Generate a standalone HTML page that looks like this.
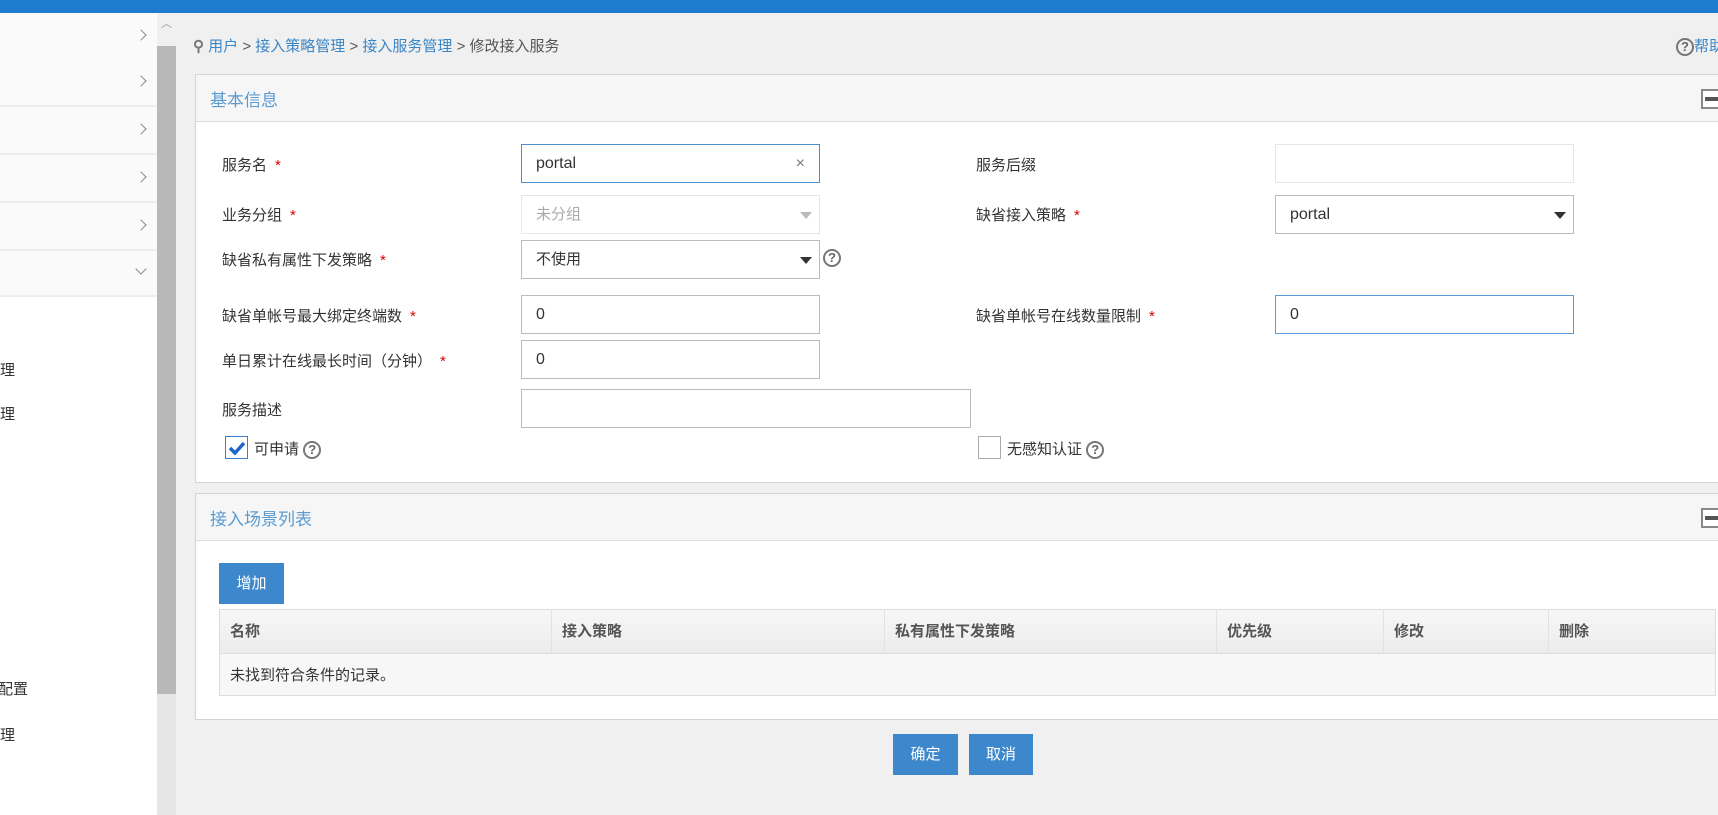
<!DOCTYPE html>
<html><head><meta charset="utf-8"><style>
*{box-sizing:border-box;margin:0;padding:0}
body{width:1718px;height:815px;overflow:hidden;background:#f0f0f0;font-family:"Liberation Sans","Noto Sans CJK SC",sans-serif;font-size:15px;color:#333;position:relative}
.a{position:absolute;white-space:nowrap}
.top{left:0;top:0;width:1718px;height:13px;background:#1f7bcd}
.side{left:0;top:13px;width:157px;height:802px;background:#fff}
.srow{position:absolute;left:0;width:157px;height:48px;border-bottom:2px solid #eee;background:#fafafa}
.chev{position:absolute;right:12px;top:18px;width:8px;height:8px;border-right:1.5px solid #888;border-top:1.5px solid #888;transform:rotate(45deg)}
.sb{left:157px;top:13px;width:19px;height:802px;background:#e6e6e6}
.thumb{left:157px;top:46px;width:19px;height:648px;background:#b8b8b8}
.panel{background:#fff;border:1px solid #d4d4d4;border-right:none}
.ph{position:absolute;left:0;top:0;right:0;height:47px;background:#f6f6f6;border-bottom:1px solid #ddd;color:#5b9bd0;font-size:17px;padding:11px 0 0 14px}
.min{position:absolute;right:-3px;top:14px;width:20px;height:20px;border:2px solid #888;background:#fff}
.min:after{content:"";position:absolute;left:2px;top:6px;width:16px;height:4px;background:#555}
.lbl{position:absolute;font-size:15px;color:#333;white-space:nowrap}
.st{color:#d00;margin-left:8px}
.inp{position:absolute;height:39px;border:1px solid #bbb;background:#fff;padding:0 14px;line-height:37px;font-size:16px}
.arr{position:absolute;right:7px;top:16px;border-left:6px solid transparent;border-right:6px solid transparent;border-top:7px solid #333}
.q{display:inline-block;width:18px;height:18px;border:2px solid #777;border-radius:50%;font-size:13px;font-weight:bold;line-height:14px;text-align:center;color:#666;vertical-align:middle}
.btn{position:absolute;background:#3d88cc;color:#fff;text-align:center;font-size:15px}
.th{position:absolute;top:0;height:44px;line-height:44px;font-weight:bold;color:#555;padding-left:10px;border-right:1px solid #e2e2e2}
</style></head><body>
<div class="a top"></div>
<div class="a side">
<div class="srow" style="top:0"><div class="chev"></div></div>
<div class="srow" style="top:46px"><div class="chev"></div></div>
<div class="srow" style="top:94px"><div class="chev"></div></div>
<div class="srow" style="top:142px"><div class="chev"></div></div>
<div class="srow" style="top:190px"><div class="chev"></div></div>
<div class="srow" style="top:238px;height:46px"><div class="chev" style="transform:rotate(135deg);top:14px"></div></div>
<div class="a" style="left:0;top:346px">理</div>
<div class="a" style="left:0;top:390px">理</div>
<div class="a" style="left:-8px;top:596px;color:#8bc">·</div>
<div class="a" style="left:-2px;top:665px">配置</div>
<div class="a" style="left:0;top:711px">理</div>
</div>
<div class="a sb"></div>
<div class="a" style="left:157px;top:13px;width:19px;height:33px;background:#f0f0f0;color:#999;text-align:center;font-size:11px;line-height:22px">︿</div>
<div class="a thumb"></div>

<div class="a" style="left:193px;top:35px;font-size:15px;color:#555"><span style="color:#777;font-weight:bold">⚲</span> <span style="color:#3b86c6">用户</span> &gt; <span style="color:#3b86c6">接入策略管理</span> &gt; <span style="color:#3b86c6">接入服务管理</span> &gt; 修改接入服务</div>
<div class="a" style="left:1676px;top:35px;color:#3b86c6"><span class="q">?</span>帮助</div>

<div class="a panel" style="left:195px;top:74px;width:1523px;height:409px">
<div class="ph">基本信息<div class="min"></div></div>
</div>
<div class="lbl" style="left:222px;top:154px">服务名<span class="st">*</span></div>
<div class="inp" style="left:521px;top:144px;width:299px;border-color:#4a90d0">portal<span style="position:absolute;right:14px;color:#777">×</span></div>
<div class="lbl" style="left:976px;top:154px">服务后缀</div>
<div class="inp" style="left:1275px;top:144px;width:299px;border-color:#e6e6e6"></div>

<div class="lbl" style="left:222px;top:204px">业务分组<span class="st">*</span></div>
<div class="inp" style="left:521px;top:195px;width:299px;border-color:#e6e6e6;color:#aaa;font-size:15px">未分组<div class="arr" style="border-top-color:#bbb"></div></div>
<div class="lbl" style="left:976px;top:204px">缺省接入策略<span class="st">*</span></div>
<div class="inp" style="left:1275px;top:195px;width:299px">portal<div class="arr"></div></div>

<div class="lbl" style="left:222px;top:249px">缺省私有属性下发策略<span class="st">*</span></div>
<div class="inp" style="left:521px;top:240px;width:299px;font-size:15px">不使用<div class="arr"></div></div>
<div class="a" style="left:823px;top:249px"><span class="q">?</span></div>

<div class="lbl" style="left:222px;top:305px">缺省单帐号最大绑定终端数<span class="st">*</span></div>
<div class="inp" style="left:521px;top:295px;width:299px">0</div>
<div class="lbl" style="left:976px;top:305px">缺省单帐号在线数量限制<span class="st">*</span></div>
<div class="inp" style="left:1275px;top:295px;width:299px;border-color:#5a9bd5">0</div>

<div class="lbl" style="left:222px;top:350px">单日累计在线最长时间（分钟）<span class="st">*</span></div>
<div class="inp" style="left:521px;top:340px;width:299px">0</div>

<div class="lbl" style="left:222px;top:399px">服务描述</div>
<div class="inp" style="left:521px;top:389px;width:450px"></div>

<div class="a" style="left:225px;top:436px;width:23px;height:23px;border:1px solid #3b7fc6;background:#fff"><svg width="21" height="21"><path d="M4 11 L9 16 L18 6" stroke="#1c64c8" stroke-width="3.5" fill="none"/></svg></div>
<div class="lbl" style="left:254px;top:438px">可申请 <span class="q">?</span></div>
<div class="a" style="left:978px;top:436px;width:23px;height:23px;border:1px solid #aaa;background:#fff"></div>
<div class="lbl" style="left:1007px;top:438px">无感知认证 <span class="q">?</span></div>

<div class="a panel" style="left:195px;top:493px;width:1523px;height:227px">
<div class="ph">接入场景列表<div class="min"></div></div>
</div>
<div class="btn" style="left:219px;top:563px;width:65px;height:41px;line-height:41px">增加</div>
<div class="a" style="left:219px;top:609px;width:1497px;height:87px;border:1px solid #ddd;background:#f7f7f7">
<div class="a" style="left:0;top:0;width:1495px;height:44px;background:linear-gradient(#f7f7f7,#ececec);border-bottom:1px solid #ddd"></div>
<div class="th" style="left:0;width:332px">名称</div>
<div class="th" style="left:332px;width:333px">接入策略</div>
<div class="th" style="left:665px;width:332px">私有属性下发策略</div>
<div class="th" style="left:997px;width:167px">优先级</div>
<div class="th" style="left:1164px;width:165px">修改</div>
<div class="th" style="left:1329px;width:166px;border-right:none">删除</div>
<div class="a" style="left:10px;top:54px;color:#333">未找到符合条件的记录。</div>
</div>

<div class="btn" style="left:893px;top:734px;width:65px;height:41px;line-height:41px">确定</div>
<div class="btn" style="left:969px;top:734px;width:64px;height:41px;line-height:41px">取消</div>
</body></html>
